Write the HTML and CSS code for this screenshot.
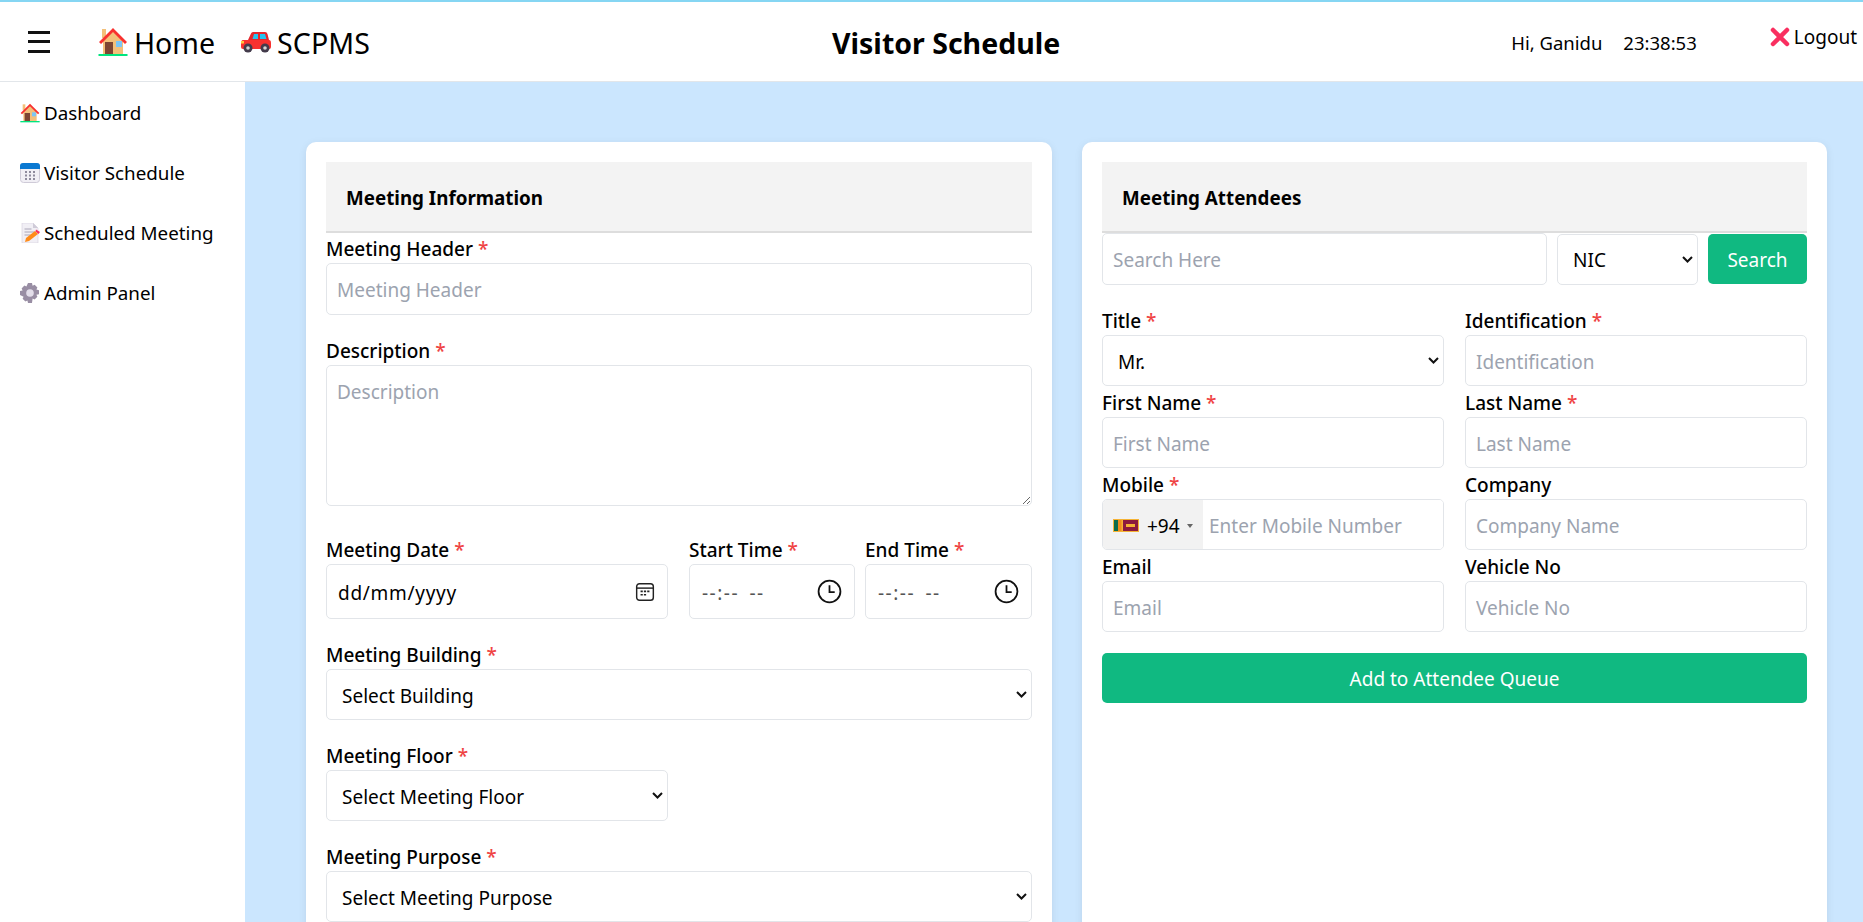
FILE: index.html
```html
<!DOCTYPE html>
<html lang="en">
<head>
  <meta charset="UTF-8">
  <meta name="viewport" content="width=device-width, initial-scale=1.0">
  <title>Visitor Schedule</title>
  <link rel="stylesheet" href="styles.css">
</head>
<body>
  <svg class="sprites" width="0" height="0">
    <symbol id="house" viewBox="0 0 30 30">
      <rect x="4" y="2" width="4" height="9" fill="#f3c07a"/>
      <path d="M5 13 15 3l10 10v14H5z" fill="#f3c07a"/>
      <path d="M1 15 15 1l14 14-2 2L15 5 3 17z" fill="#f8312f"/>
      <rect x="7" y="15" width="8" height="12" fill="#7d4533"/>
      <rect x="18" y="14" width="6" height="6" fill="#7cc6f5"/>
      <rect x="0.5" y="27" width="29" height="2" fill="#00e57f"/>
    </symbol>
    <symbol id="car" viewBox="0 0 30 22">
      <path d="M7 9 10 2.500Q10.500 1 12 1h12q2 0 2.500 2L28 9z" fill="#e5262c"/>
      <path d="M11.500 8 13 3h4v5zM19 3h5l1.500 5H19z" fill="#27c3ef"/>
      <path d="M2 9h26q2 0 2 3v4q0 2-2 2H2q-2 0-2-2v-3q0-4 2-4z" fill="#f8312f"/>
      <rect x="0" y="10" width="3" height="2.500" fill="#ffc83d"/>
      <circle cx="7" cy="17" r="4.500" fill="#433b4b"/>
      <circle cx="7" cy="17" r="1.800" fill="#d3d3d3"/>
      <circle cx="24" cy="17" r="4.500" fill="#433b4b"/>
      <circle cx="24" cy="17" r="1.800" fill="#d3d3d3"/>
    </symbol>
    <symbol id="calendar" viewBox="0 0 20 20">
      <rect x="0.500" y="0.500" width="19" height="19" rx="3" fill="#f1eff5" stroke="#cfcbd8"/>
      <path d="M0 6V3q0-3 3-3h14q3 0 3 3v3z" fill="#0a78d1"/>
      <g fill="#8e8a9c">
        <rect x="5" y="8" width="2" height="2"/><rect x="9" y="8" width="2" height="2"/><rect x="13" y="8" width="2" height="2"/>
        <rect x="5" y="11.500" width="2" height="2"/><rect x="9" y="11.500" width="2" height="2"/><rect x="13" y="11.500" width="2" height="2"/>
        <rect x="5" y="15" width="2" height="2"/><rect x="9" y="15" width="2" height="2"/><rect x="13" y="15" width="2" height="2"/>
      </g>
    </symbol>
    <symbol id="memo" viewBox="0 0 20 20">
      <path d="M2 0h11l5 5v15H2z" fill="#f1eff5" stroke="#d3cfdb" stroke-width="0.600"/>
      <path d="M13 0v5h5z" fill="#cfcbd8"/>
      <path d="M4.500 6h7M4.500 9h10M4.500 12h6" stroke="#aaa6b8" stroke-width="1"/>
      <path d="M6 15 15 8l3 3-9 7-4 1z" fill="#ff8c1a"/>
      <path d="M16 6.500 20 9l-1.500 2-3-2.500z" fill="#f92f60"/>
    </symbol>
    <symbol id="gear" viewBox="0 0 20 20">
      <path d="M8 0h4l.6 2.700 2-.9 2.800 2.800-1 2 2.600.6v4l-2.600.6 1 2-2.800 2.800-2-1L12 20H8l-.6-2.400-2 1-2.800-2.800 1-2L0 12V8l2.600-.6-1-2 2.800-2.800 2 .9z" fill="#998ea4"/>
      <circle cx="10" cy="10" r="3.800" fill="#e3deea"/>
    </symbol>
  </svg>

  <header class="topbar">
    <div class="menu-btn"><span></span><span></span><span></span></div>
    <a class="brand home"><svg class="icon-lg"><use href="#house"/></svg><span>Home</span></a>
    <a class="brand scpms"><svg class="icon-car"><use href="#car"/></svg><span>SCPMS</span></a>
    <h1 class="page-title">Visitor Schedule</h1>
    <div class="user">Hi, Ganidu</div>
    <div class="clock">23:38:53</div>
    <a class="logout">
      <svg class="icon-x" viewBox="0 0 20 20"><path d="M3 3 17 17M17 3 3 17" stroke="#f92f60" stroke-width="4.500" stroke-linecap="round"/></svg>Logout
    </a>
  </header>

  <div class="layout">
    <nav class="sidebar">
      <a class="nav-item"><svg class="icon"><use href="#house"/></svg>Dashboard</a>
      <a class="nav-item"><svg class="icon"><use href="#calendar"/></svg>Visitor Schedule</a>
      <a class="nav-item"><svg class="icon"><use href="#memo"/></svg>Scheduled Meeting</a>
      <a class="nav-item"><svg class="icon"><use href="#gear"/></svg>Admin Panel</a>
    </nav>

    <main class="content">
      <section class="card">
        <h2 class="card-head">Meeting Information</h2>
        <div class="field field-first">
          <label>Meeting Header <em>*</em></label>
          <input class="control" type="text" placeholder="Meeting Header">
        </div>
        <div class="field field-wide">
          <label>Description <em>*</em></label>
          <textarea class="control" placeholder="Description"></textarea>
        </div>
        <div class="date-row">
          <div class="date-col">
            <label>Meeting Date <em>*</em></label>
            <div class="control picker">
              <span class="date-text">dd/mm/yyyy</span>
              <svg class="cal-ico" viewBox="0 0 18 18" fill="none" stroke="#222"><rect x="1.500" y="1.500" width="15" height="15" rx="2.500" stroke-width="1.300"/><path d="M1.500 5.500h15" stroke-width="1.300"/><path d="M5 8.500h2M8 8.500h2M11 8.500h2M5 11.500h2M8 11.500h2" stroke-width="1.500"/></svg>
            </div>
          </div>
          <div class="time-col">
            <label>Start Time <em>*</em></label>
            <div class="control picker time">
              <span class="time-text">--:-- --</span>
              <svg class="clock-ico" viewBox="0 0 24 24" fill="none" stroke="#111" stroke-width="1.700"><circle cx="12" cy="12" r="10.500"/><path d="M12 6v6.500h5"/></svg>
            </div>
          </div>
          <div class="time-col">
            <label>End Time <em>*</em></label>
            <div class="control picker time">
              <span class="time-text">--:-- --</span>
              <svg class="clock-ico" viewBox="0 0 24 24" fill="none" stroke="#111" stroke-width="1.700"><circle cx="12" cy="12" r="10.500"/><path d="M12 6v6.500h5"/></svg>
            </div>
          </div>
        </div>
        <div class="field">
          <label>Meeting Building <em>*</em></label>
          <select class="control drop"><option>Select Building</option></select>
        </div>
        <div class="field half">
          <label>Meeting Floor <em>*</em></label>
          <select class="control drop"><option>Select Meeting Floor</option></select>
        </div>
        <div class="field">
          <label>Meeting Purpose <em>*</em></label>
          <select class="control drop"><option>Select Meeting Purpose</option></select>
        </div>
      </section>

      <section class="card">
        <h2 class="card-head">Meeting Attendees</h2>
        <div class="search-row">
          <input class="control" type="text" placeholder="Search Here">
          <select class="control drop"><option>NIC</option></select>
          <button class="btn">Search</button>
        </div>
        <div class="attendee-grid">
          <div>
            <label>Title <em>*</em></label>
            <select class="control drop"><option>Mr.</option></select>
          </div>
          <div>
            <label>Identification <em>*</em></label>
            <input class="control" type="text" placeholder="Identification">
          </div>
          <div>
            <label>First Name <em>*</em></label>
            <input class="control" type="text" placeholder="First Name">
          </div>
          <div>
            <label>Last Name <em>*</em></label>
            <input class="control" type="text" placeholder="Last Name">
          </div>
          <div>
            <label>Mobile <em>*</em></label>
            <div class="control phone">
              <div class="dial">
                <svg class="flag" viewBox="0 0 26 13">
                  <rect width="26" height="13" fill="#f5b335"/>
                  <rect x="1" y="1" width="4" height="11" fill="#0a6b4b"/>
                  <rect x="5" y="1" width="3.500" height="11" fill="#f08a1d"/>
                  <rect x="10" y="1" width="15" height="11" fill="#8d1b3d"/>
                  <path d="M13 5h9v3h-9z" fill="#f5b335"/>
                </svg>
                <span>+94</span><i class="caret"></i>
              </div>
              <input type="text" placeholder="Enter Mobile Number">
            </div>
          </div>
          <div>
            <label>Company</label>
            <input class="control" type="text" placeholder="Company Name">
          </div>
          <div>
            <label>Email</label>
            <input class="control" type="text" placeholder="Email">
          </div>
          <div>
            <label>Vehicle No</label>
            <input class="control" type="text" placeholder="Vehicle No">
          </div>
        </div>
        <button class="btn btn-block">Add to Attendee Queue</button>
      </section>
    </main>
  </div>
</body>
</html>
```

FILE: styles.css
```css
* { box-sizing: border-box; }
html, body { height: 100%; }
body { margin: 0; height: 100vh; overflow: hidden; display: flex; flex-direction: column; font-family: "Noto Sans", "Open Sans", sans-serif; font-size: 19px; color: #000; background: #cbe6fe; }
.sprites { position: absolute; }

.topbar { display: flex; align-items: center; height: 82px; flex: none; padding: 0 6px 0 28px; background: #fff; border-top: 2px solid #86d6f3; border-bottom: 1px solid #e2e6ea; }
.menu-btn { width: 22px; height: 22px; display: flex; flex-direction: column; justify-content: space-between; margin-right: 48px; }
.menu-btn span { height: 3px; background: #111; }
.brand { display: flex; align-items: center; font-size: 28.500px; gap: 6px; margin-right: 26px; }
.brand span { padding-top: 2px; }
.scpms { gap: 6px; letter-spacing: 0.100px; margin-right: 23px; }
.icon-lg { width: 30px; height: 30px; }
.icon-car { width: 30px; height: 22px; }
.page-title { margin: 0 0 0 439px; padding-top: 2px; font-size: 28.500px; font-weight: 700; }
.user { margin-left: auto; padding-top: 2px; font-size: 18.500px; }
.clock { margin-left: 21px; padding-top: 2px; font-size: 18.500px; }
.logout { display: flex; align-items: center; gap: 4px; margin: 0 0 10px 73px; }
.icon-x { width: 20px; height: 20px; }

.layout { flex: 1; display: flex; min-height: 0; }
.sidebar { width: 245px; flex: none; padding-top: 1px; background: #fff; }
.nav-item { display: flex; align-items: center; height: 60px; padding-left: 20px; gap: 4px; font-size: 18.800px; }
.icon { width: 20px; height: 20px; }

.content { flex: 1; display: grid; grid-template-columns: 746px 745px; column-gap: 30px; padding: 60px 36px 0 61px; align-items: start; }
.card { background: #fff; border-radius: 10px; padding: 20px; height: 900px; box-shadow: 0 2px 8px rgba(0, 0, 0, 0.08); }
.card-head { margin: 0; height: 71px; padding: 2px 0 0 20px; display: flex; align-items: center; font-size: 18.800px; font-weight: 700; background: #f3f3f3; border-bottom: 2px solid #ddd; }

label { display: block; font-weight: 500; line-height: 33px; height: 30px; }
em { font-style: normal; color: #ef4444; }
.control { display: block; width: 100%; height: 51px; padding: 2px 10px 0; font: inherit; color: #000; background: #fff; border: 1px solid #e2e5e9; border-radius: 5px; outline: none; }
input::placeholder, textarea::placeholder { color: #9ca3af; opacity: 1; }
textarea.control { height: 141px; padding-top: 13px; resize: vertical; }
.drop { appearance: none; padding-left: 15px; background: #fff url("data:image/svg+xml,%3Csvg xmlns='http://www.w3.org/2000/svg' width='11' height='7'%3E%3Cpath d='M1 1l4.500 4.500L10 1' fill='none' stroke='%23111' stroke-width='2'/%3E%3C/svg%3E") no-repeat right 4px center; }

.field { margin-bottom: 20px; }
.field-first .control { height: 52px; }
.field-wide { margin-bottom: 28px; }
.half { width: 342px; }
.date-row { display: flex; margin-bottom: 20px; }
.date-col { width: 342px; margin-right: 21px; }
.time-col { width: 166px; margin-right: 10px; }
.time-col:last-child { width: 167px; margin-right: 0; }
.date-row .control { height: 55px; }
.picker { display: flex; align-items: center; justify-content: space-between; padding: 0 12px 0 11px; }
.picker span { padding-top: 2px; }
.date-text { letter-spacing: 0.700px; }
.time { color: #555; padding-left: 12px; }
.time-text { letter-spacing: 1.500px; word-spacing: 4px; }
.cal-ico { width: 20px; height: 20px; }
.clock-ico { width: 25px; height: 25px; }

.search-row { display: grid; grid-template-columns: 445px 141px 99px; column-gap: 10px; align-items: center; margin-bottom: 19px; }
.search-row input { height: 52px; }
.btn { height: 50px; padding-top: 2px; border: 0; border-radius: 5px; font: inherit; color: #fff; background: #10b981; }
.btn-block { display: block; width: 100%; margin-top: 21px; }

.attendee-grid { display: grid; grid-template-columns: 342px 342px; column-gap: 21px; }
.attendee-grid label { height: 31px; line-height: 34px; }

.phone { display: flex; padding: 0; overflow: hidden; }
.dial { display: flex; align-items: center; width: 100px; flex: none; padding: 2px 0 0 10px; background: #f2f2f2; }
.dial span { margin-left: 8px; }
.flag { width: 26px; height: 13px; }
.caret { margin-left: 7px; border: 3px solid transparent; border-top: 4px solid #666; border-bottom: 0; }
.phone input { flex: 1; min-width: 0; border: 0; padding: 2px 6px 0; font: inherit; outline: none; }
```
